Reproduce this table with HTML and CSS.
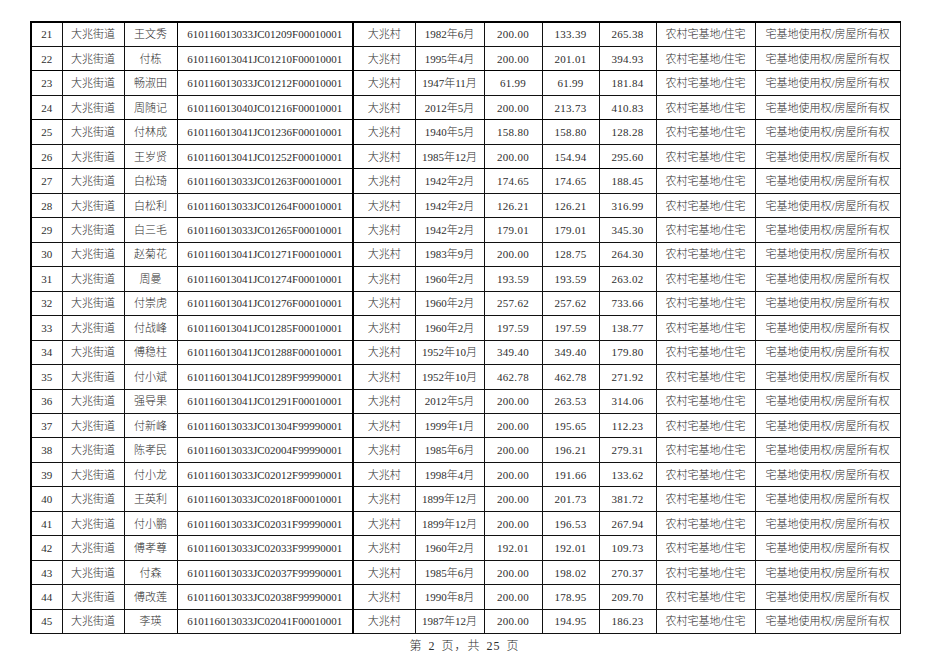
FILE: index.html
```html
<!DOCTYPE html>
<html lang="zh-CN">
<head>
<meta charset="utf-8">
<title>第 2 页</title>
<link rel="stylesheet" href="styles.css">
</head>
<body>
<div class="page">
<table class="sheet">
<colgroup>
<col class="c-no"><col class="c-st"><col class="c-nm"><col class="c-id"><col class="c-vl"><col class="c-dt"><col class="c-n1"><col class="c-n2"><col class="c-n3"><col class="c-ty"><col class="c-rt">
</colgroup>
<tbody>
<tr><td>21</td><td>大兆街道</td><td>王文秀</td><td class="id">610116013033JC01209F00010001</td><td>大兆村</td><td>1982年6月</td><td class="num">200.00</td><td class="num">133.39</td><td class="num">265.38</td><td>农村宅基地/住宅</td><td>宅基地使用权/房屋所有权</td></tr>
<tr class="tk"><td>22</td><td>大兆街道</td><td>付栋</td><td class="id">610116013041JC01210F00010001</td><td>大兆村</td><td>1995年4月</td><td class="num">200.00</td><td class="num">201.01</td><td class="num">394.93</td><td>农村宅基地/住宅</td><td>宅基地使用权/房屋所有权</td></tr>
<tr><td>23</td><td>大兆街道</td><td>畅淑田</td><td class="id">610116013033JC01212F00010001</td><td>大兆村</td><td>1947年11月</td><td class="num">61.99</td><td class="num">61.99</td><td class="num">181.84</td><td>农村宅基地/住宅</td><td>宅基地使用权/房屋所有权</td></tr>
<tr class="tk"><td>24</td><td>大兆街道</td><td>周随记</td><td class="id">610116013040JC01216F00010001</td><td>大兆村</td><td>2012年5月</td><td class="num">200.00</td><td class="num">213.73</td><td class="num">410.83</td><td>农村宅基地/住宅</td><td>宅基地使用权/房屋所有权</td></tr>
<tr><td>25</td><td>大兆街道</td><td>付林成</td><td class="id">610116013041JC01236F00010001</td><td>大兆村</td><td>1940年5月</td><td class="num">158.80</td><td class="num">158.80</td><td class="num">128.28</td><td>农村宅基地/住宅</td><td>宅基地使用权/房屋所有权</td></tr>
<tr class="tk"><td>26</td><td>大兆街道</td><td>王岁贤</td><td class="id">610116013041JC01252F00010001</td><td>大兆村</td><td>1985年12月</td><td class="num">200.00</td><td class="num">154.94</td><td class="num">295.60</td><td>农村宅基地/住宅</td><td>宅基地使用权/房屋所有权</td></tr>
<tr><td>27</td><td>大兆街道</td><td>白松琦</td><td class="id">610116013033JC01263F00010001</td><td>大兆村</td><td>1942年2月</td><td class="num">174.65</td><td class="num">174.65</td><td class="num">188.45</td><td>农村宅基地/住宅</td><td>宅基地使用权/房屋所有权</td></tr>
<tr><td>28</td><td>大兆街道</td><td>白松利</td><td class="id">610116013033JC01264F00010001</td><td>大兆村</td><td>1942年2月</td><td class="num">126.21</td><td class="num">126.21</td><td class="num">316.99</td><td>农村宅基地/住宅</td><td>宅基地使用权/房屋所有权</td></tr>
<tr><td>29</td><td>大兆街道</td><td>白三毛</td><td class="id">610116013033JC01265F00010001</td><td>大兆村</td><td>1942年2月</td><td class="num">179.01</td><td class="num">179.01</td><td class="num">345.30</td><td>农村宅基地/住宅</td><td>宅基地使用权/房屋所有权</td></tr>
<tr><td>30</td><td>大兆街道</td><td>赵菊花</td><td class="id">610116013041JC01271F00010001</td><td>大兆村</td><td>1983年9月</td><td class="num">200.00</td><td class="num">128.75</td><td class="num">264.30</td><td>农村宅基地/住宅</td><td>宅基地使用权/房屋所有权</td></tr>
<tr><td>31</td><td>大兆街道</td><td>周曼</td><td class="id">610116013041JC01274F00010001</td><td>大兆村</td><td>1960年2月</td><td class="num">193.59</td><td class="num">193.59</td><td class="num">263.02</td><td>农村宅基地/住宅</td><td>宅基地使用权/房屋所有权</td></tr>
<tr><td>32</td><td>大兆街道</td><td>付崇虎</td><td class="id">610116013041JC01276F00010001</td><td>大兆村</td><td>1960年2月</td><td class="num">257.62</td><td class="num">257.62</td><td class="num">733.66</td><td>农村宅基地/住宅</td><td>宅基地使用权/房屋所有权</td></tr>
<tr><td>33</td><td>大兆街道</td><td>付战峰</td><td class="id">610116013041JC01285F00010001</td><td>大兆村</td><td>1960年2月</td><td class="num">197.59</td><td class="num">197.59</td><td class="num">138.77</td><td>农村宅基地/住宅</td><td>宅基地使用权/房屋所有权</td></tr>
<tr><td>34</td><td>大兆街道</td><td>傅稳柱</td><td class="id">610116013041JC01288F00010001</td><td>大兆村</td><td>1952年10月</td><td class="num">349.40</td><td class="num">349.40</td><td class="num">179.80</td><td>农村宅基地/住宅</td><td>宅基地使用权/房屋所有权</td></tr>
<tr><td>35</td><td>大兆街道</td><td>付小斌</td><td class="id">610116013041JC01289F99990001</td><td>大兆村</td><td>1952年10月</td><td class="num">462.78</td><td class="num">462.78</td><td class="num">271.92</td><td>农村宅基地/住宅</td><td>宅基地使用权/房屋所有权</td></tr>
<tr><td>36</td><td>大兆街道</td><td>强导果</td><td class="id">610116013041JC01291F00010001</td><td>大兆村</td><td>2012年5月</td><td class="num">200.00</td><td class="num">263.53</td><td class="num">314.06</td><td>农村宅基地/住宅</td><td>宅基地使用权/房屋所有权</td></tr>
<tr><td>37</td><td>大兆街道</td><td>付新峰</td><td class="id">610116013033JC01304F99990001</td><td>大兆村</td><td>1999年1月</td><td class="num">200.00</td><td class="num">195.65</td><td class="num">112.23</td><td>农村宅基地/住宅</td><td>宅基地使用权/房屋所有权</td></tr>
<tr><td>38</td><td>大兆街道</td><td>陈孝民</td><td class="id">610116013033JC02004F99990001</td><td>大兆村</td><td>1985年6月</td><td class="num">200.00</td><td class="num">196.21</td><td class="num">279.31</td><td>农村宅基地/住宅</td><td>宅基地使用权/房屋所有权</td></tr>
<tr><td>39</td><td>大兆街道</td><td>付小龙</td><td class="id">610116013033JC02012F99990001</td><td>大兆村</td><td>1998年4月</td><td class="num">200.00</td><td class="num">191.66</td><td class="num">133.62</td><td>农村宅基地/住宅</td><td>宅基地使用权/房屋所有权</td></tr>
<tr><td>40</td><td>大兆街道</td><td>王英利</td><td class="id">610116013033JC02018F00010001</td><td>大兆村</td><td>1899年12月</td><td class="num">200.00</td><td class="num">201.73</td><td class="num">381.72</td><td>农村宅基地/住宅</td><td>宅基地使用权/房屋所有权</td></tr>
<tr><td>41</td><td>大兆街道</td><td>付小鹏</td><td class="id">610116013033JC02031F99990001</td><td>大兆村</td><td>1899年12月</td><td class="num">200.00</td><td class="num">196.53</td><td class="num">267.94</td><td>农村宅基地/住宅</td><td>宅基地使用权/房屋所有权</td></tr>
<tr><td>42</td><td>大兆街道</td><td>傅孝尊</td><td class="id">610116013033JC02033F99990001</td><td>大兆村</td><td>1960年2月</td><td class="num">192.01</td><td class="num">192.01</td><td class="num">109.73</td><td>农村宅基地/住宅</td><td>宅基地使用权/房屋所有权</td></tr>
<tr><td>43</td><td>大兆街道</td><td>付森</td><td class="id">610116013033JC02037F99990001</td><td>大兆村</td><td>1985年6月</td><td class="num">200.00</td><td class="num">198.02</td><td class="num">270.37</td><td>农村宅基地/住宅</td><td>宅基地使用权/房屋所有权</td></tr>
<tr><td>44</td><td>大兆街道</td><td>傅改莲</td><td class="id">610116013033JC02038F99990001</td><td>大兆村</td><td>1990年8月</td><td class="num">200.00</td><td class="num">178.95</td><td class="num">209.70</td><td>农村宅基地/住宅</td><td>宅基地使用权/房屋所有权</td></tr>
<tr><td>45</td><td>大兆街道</td><td>李瑛</td><td class="id">610116013033JC02041F00010001</td><td>大兆村</td><td>1987年12月</td><td class="num">200.00</td><td class="num">194.95</td><td class="num">186.23</td><td>农村宅基地/住宅</td><td>宅基地使用权/房屋所有权</td></tr>
</tbody>
</table>
<div class="footer">第 2 页，共 25 页</div>
</div>
</body>
</html>
```

FILE: styles.css
```css
html, body {
  margin: 0;
  padding: 0;
  background: #ffffff;
}

body {
  font-family: "Liberation Serif", "Noto Sans CJK SC", serif;
  color: #2e2e2e;
}

.page {
  padding: 21px 0 0 30px;
  width: 870px;
}

.sheet {
  border-collapse: collapse;
  table-layout: fixed;
  width: 869px;
  font-size: 11px;
  border-top: 2px solid #000;
  border-left: 2px solid #000;
  border-bottom: 1.5px solid #000;
  border-right: 1.5px solid #000;
}

.sheet tr {
  height: 24.48px;
}

.sheet tr.tk td {
  border-bottom: 1.6px solid #000;
}

.sheet td {
  border: 1px solid #111;
  padding: 0;
  text-align: center;
  vertical-align: middle;
  white-space: nowrap;
  overflow: hidden;
  line-height: 14px;
  font-weight: 300;
}

.sheet td.num {
  letter-spacing: 0.3px;
}

.sheet td:nth-child(3) {
  border-right: 1.6px solid #000;
}

.sheet td:nth-child(4) {
  border-right: 2px solid #000;
}

.c-no { width: 31px; }
.c-st { width: 62px; }
.c-nm { width: 53px; }
.c-id { width: 176px; }
.c-vl { width: 62px; }
.c-dt { width: 69px; }
.c-n1 { width: 58px; }
.c-n2 { width: 57px; }
.c-n3 { width: 57px; }
.c-ty { width: 99px; }
.c-rt { width: 145px; }

.footer {
  margin-top: 4px;
  text-align: center;
  font-size: 12px;
  font-weight: 300;
  letter-spacing: 1px;
  word-spacing: 2px;
  width: 869px;
  line-height: 16px;
}
```
